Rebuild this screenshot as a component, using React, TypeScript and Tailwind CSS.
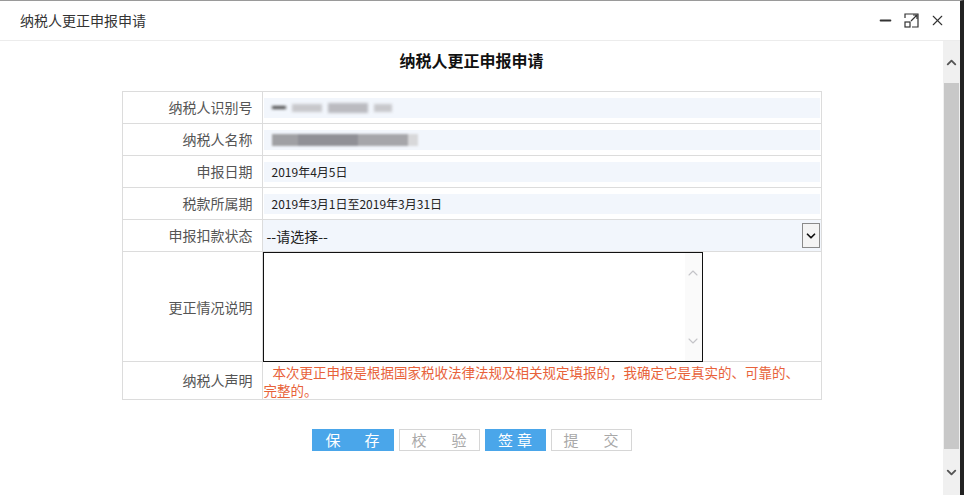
import { ChevronDown, ChevronUp, Minus, X } from "lucide-react";

const font = { fontFamily: '"Noto Sans CJK SC", "Noto Sans", sans-serif' };

const rows = [
  { label: "纳税人识别号", blur: 1 },
  { label: "纳税人名称", blur: 2 },
  { label: "申报日期", value: "2019年4月5日" },
  { label: "税款所属期", value: "2019年3月1日至2019年3月31日" },
];

function Label({ text }: { text: string }) {
  return <div className="flex items-center justify-end border-r border-[#dcdcdc] pr-[9px] text-[14px] text-[#555]">{text}</div>;
}

export default function App() {
  return (
    <div className="flex h-[495px] w-[964px] flex-col overflow-hidden border-t border-[#9a9a9a] border-r-4 border-r-[#222] bg-white" style={font}>
      <div className="flex h-[40px] shrink-0 items-center justify-between border-b border-[#ececec] pl-5 pr-[14px]">
        <span className="text-[14px] text-[#333]">纳税人更正申报申请</span>
        <div className="flex items-center gap-[10px] text-[#333]">
          <Minus size={17} strokeWidth={2.5} />
          <svg width="15" height="15" viewBox="0 0 15 15" fill="none" stroke="#333" strokeWidth="1.2">
            <path d="M1 5V1h13v13H8" />
            <rect x="1" y="9" width="5" height="5" />
            <path d="M7 8l6-6M9 2h4v4" />
          </svg>
          <X size={17} strokeWidth={1.6} />
        </div>
      </div>

      <div className="flex min-h-0 flex-1">
        <div className="flex flex-1 flex-col items-center">
          <h1 className="mt-[8px] text-[16px] font-bold leading-[22px] text-[#111]">纳税人更正申报申请</h1>

          <div className="mt-[20px] w-[700px] border border-[#dcdcdc]">
            {rows.map((r) => (
              <div key={r.label} className="grid h-[32px] grid-cols-[140px_1fr] border-b border-[#dcdcdc]">
                <Label text={r.label} />
                <div className="flex items-center px-[1px]">
                  <div className="flex h-[20px] w-full items-center bg-[#f2f6fc] pl-[8px] text-[12px] text-[#222]">
                    {r.value}
                    {r.blur === 1 && (
                      <div className="flex items-center gap-[6px] blur-[1.5px]">
                        <div className="h-[3px] w-[14px] bg-[#444]" />
                        <div className="h-[8px] w-[30px] bg-[#c8c8cc]" />
                        <div className="h-[10px] w-[40px] bg-[#bbbbc0]" />
                        <div className="h-[8px] w-[18px] bg-[#c8c8cc]" />
                      </div>
                    )}
                    {r.blur === 2 && (
                      <div className="flex items-center blur-[1px]">
                        <div className="h-[12px] w-[26px] bg-[#a0a0a4]" />
                        <div className="h-[12px] w-[60px] bg-[#909096]" />
                        <div className="h-[12px] w-[50px] bg-[#a6a6aa]" />
                        <div className="h-[12px] w-[10px] bg-[#d8d8da]" />
                      </div>
                    )}
                  </div>
                </div>
              </div>
            ))}

            <div className="grid h-[32px] grid-cols-[140px_1fr] border-b border-[#dcdcdc]">
              <Label text="申报扣款状态" />
              <div className="flex items-center justify-between bg-[#f2f6fc] pl-[4px] pr-[1px]">
                <span className="pt-[2px] text-[14px] text-[#222]">--请选择--</span>
                <div className="flex h-[25px] w-[18px] items-center justify-center border border-[#8a8a8a] bg-[#f4f4f4]">
                  <ChevronDown size={14} strokeWidth={3} color="#111" />
                </div>
              </div>
            </div>

            <div className="grid h-[110px] grid-cols-[140px_1fr] border-b border-[#dcdcdc]">
              <Label text="更正情况说明" />
              <div>
                <div className="flex h-[110px] w-[440px] justify-end border border-[#111] bg-white">
                  <div className="flex w-[17px] flex-col items-center justify-between bg-[#fafafa] py-[12px]">
                    <ChevronUp size={16} strokeWidth={1.6} color="#c4c4c8" />
                    <ChevronDown size={16} strokeWidth={1.6} color="#c4c4c8" />
                  </div>
                </div>
              </div>
            </div>

            <div className="grid h-[37px] grid-cols-[140px_1fr]">
              <Label text="纳税人声明" />
              <p className="pl-[1px] pr-[12px] pt-[1px] indent-[9px] text-[13.5px] leading-[18px] text-[#e8623a]">
                本次更正申报是根据国家税收法律法规及相关规定填报的，我确定它是真实的、可靠的、完整的。
              </p>
            </div>
          </div>

          <div className="mt-[29px] flex gap-[5px] text-[15px]">
            <button className="flex h-[22px] w-[82px] items-center justify-between bg-[#4aa6ea] px-[14px] text-white">
              <span>保</span>
              <span>存</span>
            </button>
            <button className="flex h-[22px] w-[81px] items-center justify-between border border-[#d6d6d6] bg-white px-[12px] text-[#a8a8a8]">
              <span>校</span>
              <span>验</span>
            </button>
            <button className="flex h-[22px] w-[61px] items-center justify-center gap-[4px] bg-[#4aa6ea] text-white">
              <span>签</span>
              <span>章</span>
            </button>
            <button className="flex h-[22px] w-[81px] items-center justify-between border border-[#d6d6d6] bg-white px-[12px] text-[#a8a8a8]">
              <span>提</span>
              <span>交</span>
            </button>
          </div>
        </div>

        <div className="flex w-[17px] shrink-0 flex-col bg-[#f0f0f0]">
          <div className="flex h-[42px] items-center justify-center">
            <ChevronUp size={15} strokeWidth={3} color="#555" />
          </div>
          <div className="mx-[1px] flex-1 bg-[#c8c8c8]" />
          <div className="flex h-[46px] items-center justify-center">
            <ChevronDown size={15} strokeWidth={3} color="#555" />
          </div>
        </div>
      </div>
    </div>
  );
}
